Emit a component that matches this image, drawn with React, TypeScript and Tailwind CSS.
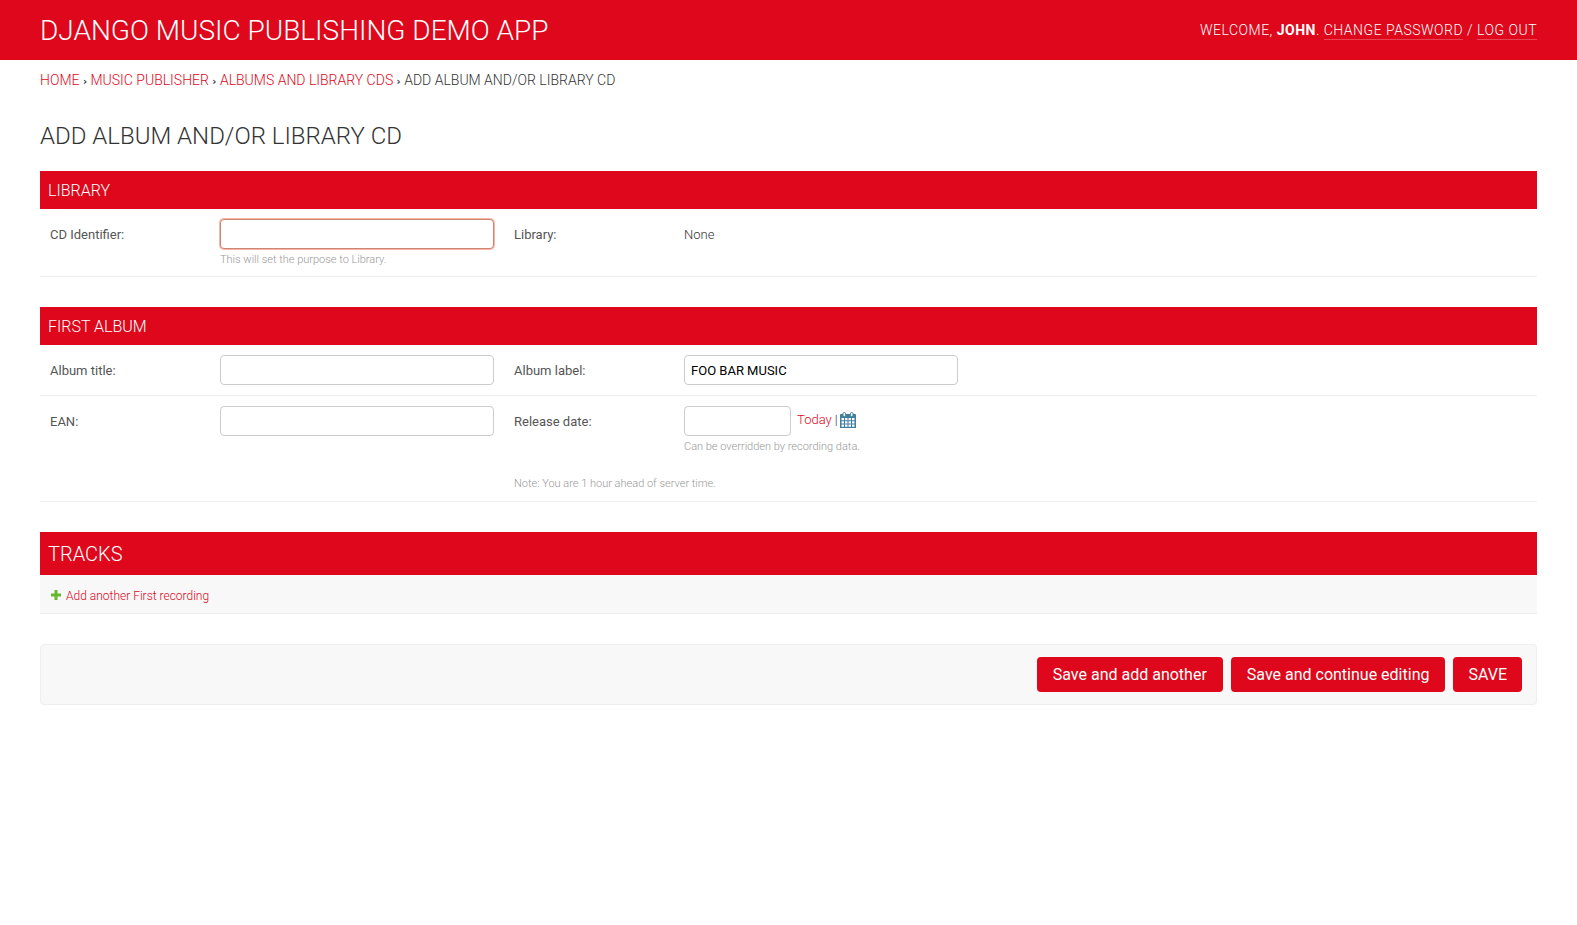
import { ReactNode } from "react";

function Crumb({ children }: { children: ReactNode }) {
  return (
    <>
      <a href="#" className="text-[#de071b]">{children}</a>{" "}
      <span className="font-['DejaVu_Sans'] text-[10px] leading-none font-bold">›</span>{" "}
    </>
  );
}

function CalendarIcon() {
  return (
    <svg width="16" height="16" viewBox="0 0 16 16" aria-hidden="true">
      <path d="M1 2h14a1 1 0 0 1 1 1v13H0V3a1 1 0 0 1 1-1z" fill="#417f9c" />
      <path
        d="M1.5 6h2.5v2.3H1.5zM5 6h2.5v2.3H5zM8.5 6H11v2.3H8.5zM12 6h2.5v2.3H12zM1.5 9.2H4v2.3H1.5zM5 9.2h2.5v2.3H5zM8.5 9.2H11v2.3H8.5zM12 9.2h2.5v2.3H12zM1.5 12.4H4v2.3H1.5zM5 12.4h2.5v2.3H5zM8.5 12.4H11v2.3H8.5zM12 12.4h2.5v2.3H12z"
        fill="#fff"
      />
      <rect x="3" y="0.5" width="2.6" height="4" rx="1.2" fill="#fff" stroke="#417f9c" />
      <rect x="10.4" y="0.5" width="2.6" height="4" rx="1.2" fill="#fff" stroke="#417f9c" />
    </svg>
  );
}

const inputBase =
  "block h-[30px] rounded-[4px] border bg-white px-1.5 text-[13px] leading-4 text-black outline-none";

function Row({ children }: { children: ReactNode }) {
  return <div className="flex items-start gap-5 border-b border-[#eee] px-2.5 pt-2.5">{children}</div>;
}

function Field({
  id,
  label,
  help,
  note,
  children,
}: {
  id: string;
  label: string;
  help?: string;
  note?: string;
  children: ReactNode;
}) {
  return (
    <div className="pb-2.5">
      <div className="flex items-start">
        <label htmlFor={id} className="w-[170px] shrink-0 pt-2 text-[13px] leading-4 text-[#555]">
          {label}
        </label>
        <div>
          {children}
          {help && <p className="pt-1 text-[11px] leading-[13px] font-light text-[#999]">{help}</p>}
        </div>
      </div>
      {note && <p className="pt-6 pb-px text-[11px] leading-[13px] font-light text-[#999]">{note}</p>}
    </div>
  );
}

function Section({ title, children }: { title: string; children: ReactNode }) {
  return (
    <fieldset className="mb-[30px]">
      <h2 className="bg-[#de071b] px-2 pt-[9px] pb-[7px] text-[16px] leading-[22px] font-light text-white uppercase">
        {title}
      </h2>
      {children}
    </fieldset>
  );
}

const buttonBase = "h-[35px] rounded-[4px] bg-[#de071b] text-[16px] leading-5 text-white";

export default function App() {
  return (
    <div className="min-h-screen bg-white font-['Roboto','Liberation_Sans',sans-serif] text-[13px] text-[#333]">
      <header className="flex h-[60px] items-center justify-between bg-[#de071b] px-10 pt-0.5 text-white">
        <a href="#" className="text-[28px] leading-8 font-light">DJANGO MUSIC PUBLISHING DEMO APP</a>
        <div className="text-[14px] leading-[17px] font-light tracking-[0.5px]">
          WELCOME, <strong className="font-bold">JOHN</strong>.{" "}
          <a href="#" className="inline-block border-b border-white/25">CHANGE PASSWORD</a>
          {" / "}
          <a href="#" className="inline-block border-b border-white/25">LOG OUT</a>
        </div>
      </header>
      <nav aria-label="Breadcrumbs" className="px-10 py-2.5 text-[14px] leading-5 font-light">
        <Crumb>HOME</Crumb>
        <Crumb>MUSIC PUBLISHER</Crumb>
        <Crumb>ALBUMS AND LIBRARY CDS</Crumb>
        ADD ALBUM AND/OR LIBRARY CD
      </nav>
      <main className="px-10 pt-[21px]">
        <h1 className="mb-[19px] text-[24px] leading-[31px] font-light">ADD ALBUM AND/OR LIBRARY CD</h1>
        <form onSubmit={(e) => e.preventDefault()}>
          <Section title="Library">
            <Row>
              <Field id="cd" label="CD Identifier:" help="This will set the purpose to Library.">
                <input id="cd" className={inputBase + " w-[274px] border-[#c98773] ring-1 ring-[#ffb5a3]"} />
              </Field>
              <Field id="library" label="Library:">
                <output id="library" className="block pt-2 leading-4 font-light text-[#333]">None</output>
              </Field>
            </Row>
          </Section>
          <Section title="First album">
            <Row>
              <Field id="title" label="Album title:">
                <input id="title" className={inputBase + " w-[274px] border-[#ccc]"} />
              </Field>
              <Field id="label" label="Album label:">
                <input id="label" defaultValue="FOO BAR MUSIC" className={inputBase + " w-[274px] border-[#ccc]"} />
              </Field>
            </Row>
            <Row>
              <Field id="ean" label="EAN:">
                <input id="ean" className={inputBase + " w-[274px] border-[#ccc]"} />
              </Field>
              <Field
                id="date"
                label="Release date:"
                help="Can be overridden by recording data."
                note="Note: You are 1 hour ahead of server time."
              >
                <div className="flex items-start">
                  <input id="date" className={inputBase + " w-[107px] border-[#ccc]"} />
                  <div className="flex items-center gap-0.5 pt-1.5 pl-1.5 leading-4 font-light">
                    <span>
                      <a href="#" className="text-[#de071b]">Today</a> |
                    </span>
                    <button type="button" aria-label="Choose date">
                      <CalendarIcon />
                    </button>
                  </div>
                </div>
              </Field>
            </Row>
          </Section>
          <section className="mb-[30px]">
            <h2 className="bg-[#de071b] px-2 pt-[9px] pb-[7px] text-[20px] leading-[27px] font-light text-white">
              TRACKS
            </h2>
            <div className="border-b border-[#eee] bg-[#f8f8f8] px-2.5 pt-3.5 pb-2.5">
              <a href="#" className="flex items-center gap-1 text-[12px] leading-[14px] font-light text-[#de071b]">
                <svg width="12" height="12" viewBox="0 0 12 12" aria-hidden="true">
                  <path d="M4.5 0h3v3.500H11v3H7.500V10h-3V6.500H1v-3h3.500z" fill="#66b82f" />
                </svg>
                Add another First recording
              </a>
            </div>
          </section>
          <div className="flex justify-end gap-2 rounded-[4px] border border-[#eee] bg-[#f8f8f8] px-3.5 py-3">
            <button type="submit" className={buttonBase + " px-4"}>Save and add another</button>
            <button type="submit" className={buttonBase + " px-4"}>Save and continue editing</button>
            <button type="submit" className={buttonBase + " px-[15px]"}>SAVE</button>
          </div>
        </form>
      </main>
    </div>
  );
}
